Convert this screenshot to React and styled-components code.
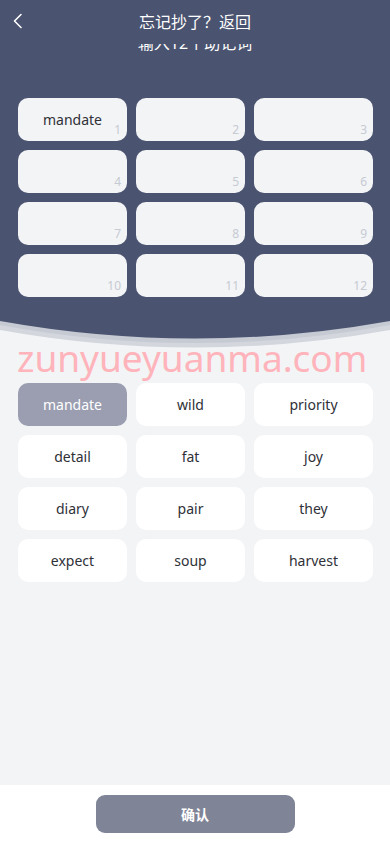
import React from 'react';
import styled, { createGlobalStyle } from 'styled-components';

const GlobalStyle = createGlobalStyle`
  * {
    box-sizing: border-box;
  }

  html,
  body {
    margin: 0;
    padding: 0;
    background: #f3f4f6;
    font-family: 'Noto Sans', 'Noto Sans CJK SC', sans-serif;
    overflow-x: hidden;
  }
`;

const DARK = '#4a5370';

const slotWords = ['mandate', '', '', '', '', '', '', '', '', '', '', ''];

const words = [
  'mandate',
  'wild',
  'priority',
  'detail',
  'fat',
  'joy',
  'diary',
  'pair',
  'they',
  'expect',
  'soup',
  'harvest',
];

const Page = styled.div`
  position: relative;
  min-height: 844px;
  display: flex;
  flex-direction: column;
  background: #f3f4f6;
`;

const TopPanel = styled.div`
  background: ${DARK};
  padding-bottom: 24px;
`;

const NavBar = styled.header`
  position: sticky;
  top: 0;
  z-index: 2;
  height: 44px;
  display: flex;
  align-items: center;
  justify-content: center;
  background: ${DARK};
`;

const BackButton = styled.button`
  position: absolute;
  left: 6px;
  top: 9px;
  width: 24px;
  height: 24px;
  padding: 0;
  border: 0;
  background: none;
  display: flex;
  align-items: center;
  justify-content: center;
`;

const Title = styled.h1`
  margin: 0;
  font-size: 16px;
  font-weight: 400;
  color: #ffffff;
  line-height: 22px;
`;

const Subtitle = styled.p`
  position: relative;
  z-index: 1;
  margin: -12px 0 0;
  text-align: center;
  font-size: 16px;
  line-height: 22px;
  color: #ffffff;
`;

const Grid = styled.div`
  display: grid;
  grid-template-columns: 109px 109px 119px;
  grid-auto-rows: 43px;
  gap: 9px;
  padding-left: 18px;
  margin-top: ${(props) => props.top || 0}px;
`;

const Slot = styled.div`
  position: relative;
  display: flex;
  align-items: center;
  justify-content: center;
  background: #f3f4f6;
  border-radius: 10px;
  font-size: 14px;
  color: #2f3137;
`;

const SlotNumber = styled.span`
  position: absolute;
  right: 6px;
  bottom: 4px;
  font-size: 12px;
  line-height: 14px;
  color: #c6cad3;
`;

const Curve = styled.svg`
  display: block;
  width: 100%;
  height: 30px;
`;

const WordButton = styled.button`
  display: flex;
  align-items: center;
  justify-content: center;
  border: 0;
  border-radius: 10px;
  padding: 0;
  font-family: inherit;
  font-size: 14px;
  background: ${(props) => (props.picked ? '#9a9eb0' : '#ffffff')};
  color: ${(props) => (props.picked ? '#ffffff' : '#2f3137')};
`;

const Main = styled.main`
  flex: 1;
`;

const Footer = styled.footer`
  height: 59px;
  background: #ffffff;
  display: flex;
  justify-content: center;
  padding-top: 10px;
`;

const ConfirmButton = styled.button`
  width: 199px;
  height: 38px;
  border: 0;
  border-radius: 9px;
  background: #7f8497;
  color: #ffffff;
  font-family: inherit;
  font-size: 14px;
  font-weight: 600;
`;

const Watermark = styled.div`
  position: absolute;
  top: 339px;
  left: 17px;
  font-size: 37px;
  line-height: 37px;
  color: #ffb3ba;
  pointer-events: none;
  white-space: nowrap;
`;

function BackIcon() {
  return (
    <svg width="12" height="16" viewBox="0 0 12 16">
      <polyline
        points="9,1.5 2.5,8 9,14.5"
        fill="none"
        stroke="#ffffff"
        strokeWidth="1.6"
        strokeLinecap="round"
        strokeLinejoin="round"
      />
    </svg>
  );
}

export default function App() {
  return (
    <>
      <GlobalStyle />
      <Page>
        <Main>
          <TopPanel>
            <NavBar>
              <BackButton aria-label="返回">
                <BackIcon />
              </BackButton>
              <Title>忘记抄了？返回</Title>
            </NavBar>
            <Subtitle>输入12个助记词</Subtitle>
            <Grid top={44}>
              {slotWords.map((word, i) => (
                <Slot key={i}>
                  {word}
                  <SlotNumber>{i + 1}</SlotNumber>
                </Slot>
              ))}
            </Grid>
          </TopPanel>
          <Curve viewBox="0 0 390 30" preserveAspectRatio="none">
            <path d="M0,0 H390 V9 Q195,44 0,9 Z" fill="#d3d6dd" />
            <path d="M0,0 H390 V4 Q195,40 0,4 Z" fill="#b9bdc9" opacity="0.5" />
            <path d="M0,0 H390 Q195,35 0,0 Z" fill={DARK} />
          </Curve>
          <Grid top={32}>
            {words.map((word, i) => (
              <WordButton key={word} picked={i === 0}>
                {word}
              </WordButton>
            ))}
          </Grid>
        </Main>
        <Footer>
          <ConfirmButton>确认</ConfirmButton>
        </Footer>
        <Watermark>zunyueyuanma.com</Watermark>
      </Page>
    </>
  );
}
